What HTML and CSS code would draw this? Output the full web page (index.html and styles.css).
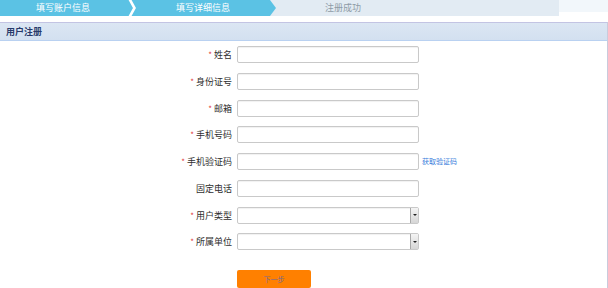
FILE: index.html
```html
<!DOCTYPE html>
<html lang="zh">
<head>
<meta charset="utf-8">
<title>用户注册</title>
<link rel="stylesheet" href="styles.css">
</head>
<body>
<div class="topbar">
  <div class="steps">
    <svg class="steps-bg" width="559" height="16" viewBox="0 0 559 16">
      <rect x="0" y="0" width="559" height="16" fill="#e2ebf3"/>
      <polygon points="0,0 270,0 276,8 270,16 0,16" fill="#5bc2e4"/>
      <polyline points="129.5,-1 134.5,8 129.5,17" fill="none" stroke="#ffffff" stroke-width="2.6"/>
    </svg>
    <div class="steps-text">
      <span class="step done">填写账户信息</span>
      <span class="step done">填写详细信息</span>
      <span class="step todo">注册成功</span>
    </div>
  </div>
  <div class="topbar-rest"></div>
</div>

<div class="panel">
  <div class="panel-head">用户注册</div>
  <div class="form">
    <label class="lbl"><span class="req">*</span>姓名</label>
    <span class="input"></span>
    <span></span>

    <label class="lbl"><span class="req">*</span>身份证号</label>
    <span class="input"></span>
    <span></span>

    <label class="lbl"><span class="req">*</span>邮箱</label>
    <span class="input"></span>
    <span></span>

    <label class="lbl"><span class="req">*</span>手机号码</label>
    <span class="input"></span>
    <span></span>

    <label class="lbl"><span class="req">*</span>手机验证码</label>
    <span class="input"></span>
    <a class="link">获取验证码</a>

    <label class="lbl">固定电话</label>
    <span class="input"></span>
    <span></span>

    <label class="lbl"><span class="req">*</span>用户类型</label>
    <span class="input select"><span class="drop"><span class="tri"></span></span></span>
    <span></span>

    <label class="lbl"><span class="req">*</span>所属单位</label>
    <span class="input select"><span class="drop"><span class="tri"></span></span></span>
    <span></span>

    <span></span>
    <button class="next">下一步</button>
    <span></span>
  </div>
</div>
</body>
</html>
```

FILE: styles.css
```css
html, body {
  margin: 0;
  padding: 0;
  background: #ffffff;
  width: 608px;
  height: 288px;
  overflow: hidden;
  font-family: "Noto Sans CJK SC", "Noto Sans", sans-serif;
}

.topbar {
  display: flex;
  height: 16px;
}

.steps {
  display: grid;
  width: 559px;
  height: 16px;
}

.steps-bg,
.steps-text {
  grid-area: 1 / 1;
}

.steps-bg {
  display: block;
}

.steps-text {
  display: grid;
  grid-template-columns: repeat(3, 126px);
  column-gap: 14px;
  align-items: center;
}

.step {
  text-align: center;
  font-size: 9px;
  line-height: 16px;
}

.step.done {
  color: #ffffff;
}

.step.todo {
  color: #8e9ba6;
}

.topbar-rest {
  flex: 1;
  background: #f2f7fb;
  height: 12px;
}

.panel {
  margin-top: 6px;
  border-right: 1px solid #c9cbdc;
  height: 270px;
}

.panel-head {
  height: 17px;
  line-height: 17px;
  background: linear-gradient(#dbe6f3, #d3e0f0);
  border-top: 1px solid #c3c4e3;
  border-bottom: 1px solid #b9d1f1;
  padding-left: 6px;
  font-size: 9px;
  font-weight: bold;
  color: #283a6a;
}

.form {
  display: grid;
  grid-template-columns: 232px 182px auto;
  column-gap: 5px;
  row-gap: 9.75px;
  align-items: center;
  padding-top: 5px;
}

.lbl {
  text-align: right;
  font-size: 9px;
  color: #2e2e2e;
  line-height: 17px;
}

.req {
  color: #e03a3a;
  margin-right: 2px;
  font-size: 8px;
}

.input {
  display: flex;
  justify-content: flex-end;
  box-sizing: border-box;
  height: 17px;
  border: 1px solid #c9c9c9;
  border-radius: 2px;
  background: #ffffff;
  box-shadow: inset 0 1px 1px rgba(0, 0, 0, 0.06);
}

.drop {
  display: flex;
  align-items: center;
  justify-content: center;
  width: 8px;
  height: 100%;
  box-sizing: border-box;
  border-left: 1px solid #a8a8a8;
  background: linear-gradient(#f4f4f4, #d6d6d6);
}

.tri {
  width: 0;
  height: 0;
  border-left: 2px solid transparent;
  border-right: 2px solid transparent;
  border-top: 2px solid #222222;
}

.link {
  font-size: 7px;
  color: #3b80dc;
  margin-left: -2px;
  line-height: 17px;
}

.next {
  margin-top: 10px;
  width: 74px;
  height: 18px;
  padding: 0;
  border: none;
  border-radius: 2px;
  background: #ff8000;
  color: #7d6a8e;
  font-family: "Noto Sans CJK SC", "Noto Sans", sans-serif;
  font-size: 7px;
  line-height: 18px;
}
```
